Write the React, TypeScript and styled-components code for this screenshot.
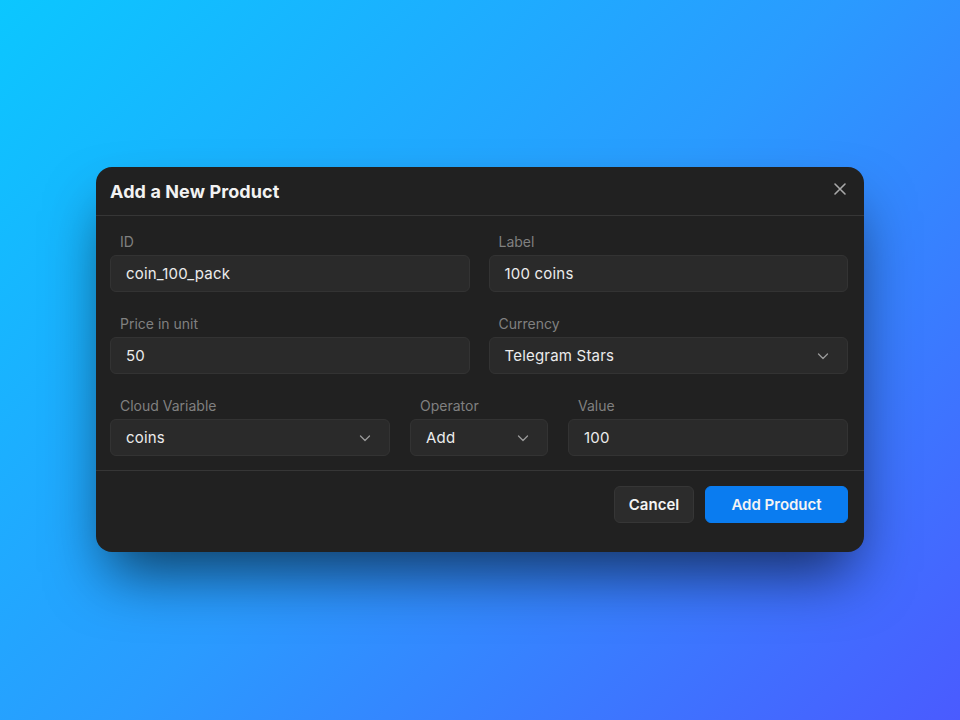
import React from 'react';
import styled, { createGlobalStyle } from 'styled-components';

const GlobalStyle = createGlobalStyle`
  html, body {
    margin: 0;
    padding: 0;
  }
  body {
    font-family: "Inter", "Noto Sans", sans-serif;
  }
  * {
    box-sizing: border-box;
  }
`;

const Page = styled.div`
  width: 960px;
  height: 720px;
  background: linear-gradient(135deg, #0bc7ff 0%, #2a9bff 50%, #4a5bff 100%);
  display: flex;
  align-items: flex-start;
  justify-content: center;
  padding-top: 167px;
`;

const Dialog = styled.div`
  width: 768px;
  background-color: #212121;
  border-radius: 16px;
  box-shadow: 0 32px 60px -12px rgba(0, 0, 0, 0.62);
  color: #ececec;
  overflow: hidden;
`;

const Header = styled.div`
  height: 49px;
  padding: 0 14px;
  display: flex;
  align-items: center;
  justify-content: space-between;
  border-bottom: 1px solid #363636;
`;

const Title = styled.h2`
  margin: 0;
  font-size: 18px;
  font-weight: 700;
  color: #f2f2f2;
  letter-spacing: 0.1px;
`;

const CloseButton = styled.button`
  background: none;
  border: none;
  padding: 0;
  width: 20px;
  height: 20px;
  margin-top: -4px;
  display: flex;
  align-items: center;
  justify-content: center;
  color: #a8a8a8;
  cursor: pointer;
`;

const Body = styled.div`
  padding: 16px 16px 14px 14px;
  display: flex;
  flex-direction: column;
  gap: 22px;
  border-bottom: 1px solid #363636;
`;

const Row = styled.div<{ $cols: string; $gap: number }>`
  display: grid;
  grid-template-columns: ${p => p.$cols};
  column-gap: ${p => p.$gap}px;
`;

const Field = styled.div`
  display: flex;
  flex-direction: column;
`;

const Label = styled.label`
  font-size: 14px;
  color: #808080;
  padding-left: 10px;
  height: 19px;
  line-height: 19px;
  margin-bottom: 4px;
`;

const Box = styled.div`
  height: 37px;
  background-color: #2a2a2a;
  border: 1px solid #333333;
  border-radius: 6px;
  padding: 0 15px;
  display: flex;
  align-items: center;
  justify-content: space-between;
  font-size: 15px;
  letter-spacing: 0.2px;
  color: #ececec;
`;

const Chevron = styled.span`
  display: flex;
  color: #9a9a9a;
  margin-right: 2px;
`;

const Footer = styled.div`
  padding: 15px 16px 29px;
  display: flex;
  justify-content: flex-end;
  gap: 11px;
`;

const Button = styled.button<{ $primary?: boolean }>`
  height: 37px;
  width: ${p => (p.$primary ? 143 : 80)}px;
  padding: 0;
  border-radius: 6px;
  border: 1px solid ${p => (p.$primary ? '#0a7cf0' : '#363636')};
  background-color: ${p => (p.$primary ? '#0a7cf0' : '#2c2c2c')};
  color: #f4f4f4;
  font-family: inherit;
  font-size: 15px;
  font-weight: 600;
  cursor: pointer;
`;

const ChevronIcon = () => (
  <Chevron>
    <svg width="14" height="14" viewBox="0 0 14 14" fill="none">
      <path d="M2.5 5l4.5 4.5L11.5 5" stroke="currentColor" strokeWidth="1.3" strokeLinecap="round" strokeLinejoin="round" />
    </svg>
  </Chevron>
);

interface FieldProps {
  label: string;
  value: string;
  select?: boolean;
}

const FormField: React.FC<FieldProps> = ({ label, value, select }) => (
  <Field>
    <Label>{label}</Label>
    <Box>
      <span>{value}</span>
      {select && <ChevronIcon />}
    </Box>
  </Field>
);

const App: React.FC = () => {
  return (
    <>
      <GlobalStyle />
      <Page>
        <Dialog>
          <Header>
            <Title>Add a New Product</Title>
            <CloseButton aria-label="Close">
              <svg width="14" height="14" viewBox="0 0 14 14" fill="none">
                <path d="M2 2l10 10M12 2L2 12" stroke="currentColor" strokeWidth="1.6" strokeLinecap="round" />
              </svg>
            </CloseButton>
          </Header>
          <Body>
            <Row $cols="1fr 1fr" $gap={19}>
              <FormField label="ID" value="coin_100_pack" />
              <FormField label="Label" value="100 coins" />
            </Row>
            <Row $cols="1fr 1fr" $gap={19}>
              <FormField label="Price in unit" value="50" />
              <FormField label="Currency" value="Telegram Stars" select />
            </Row>
            <Row $cols="280px 138px 280px" $gap={20}>
              <FormField label="Cloud Variable" value="coins" select />
              <FormField label="Operator" value="Add" select />
              <FormField label="Value" value="100" />
            </Row>
          </Body>
          <Footer>
            <Button>Cancel</Button>
            <Button $primary>Add Product</Button>
          </Footer>
        </Dialog>
      </Page>
    </>
  );
};

export default App;
